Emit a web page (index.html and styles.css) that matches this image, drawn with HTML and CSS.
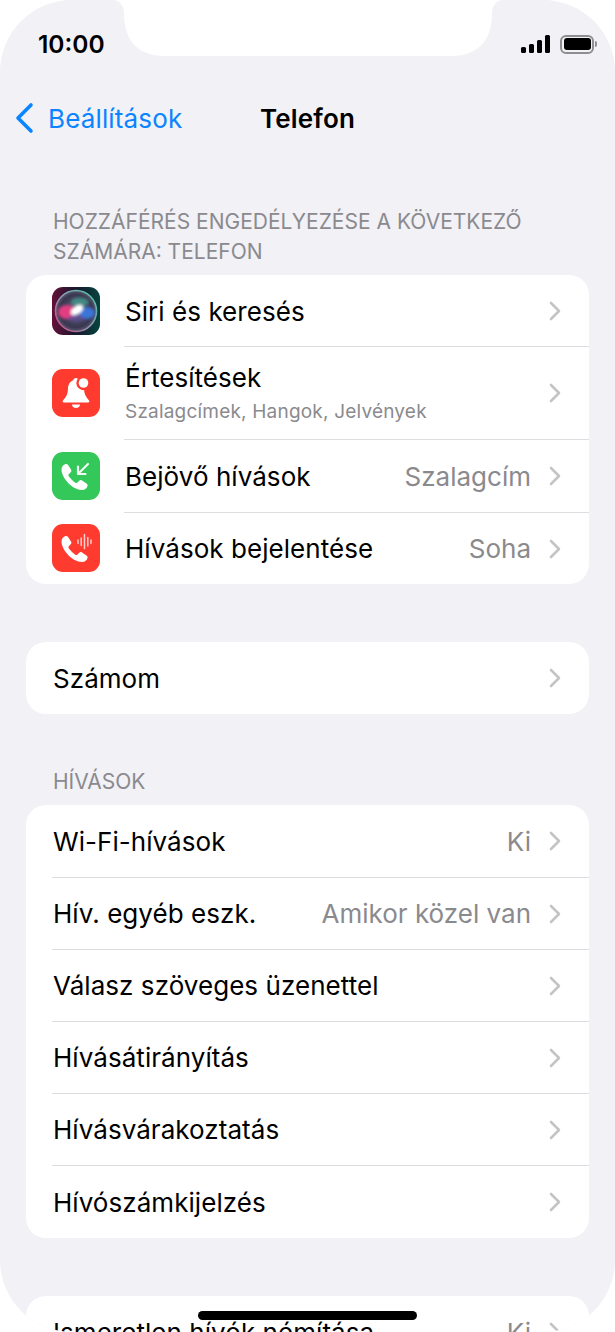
FILE: index.html
```html
<!DOCTYPE html>
<html lang="hu">
<head>
    <meta charset="UTF-8">
    <meta name="viewport" content="width=device-width, initial-scale=1.0">
    <link rel="stylesheet" href="styles.css">
    <title>Telefon</title>
</head>
<body>
    <svg class="defs" width="0" height="0">
        <defs>
            <symbol id="handset" viewBox="0 0 28 28">
                <path d="M5 1C3 1.500 1 3.500 1 6.500 1 15 12 27 21.500 27c3 0 5-2 5.500-4 .3-1.200-.2-2-1-2.600l-4.500-2.900c-1-.6-2-.5-2.800.3L17 19.500c-.7.7-1.700.7-2.500.1-2-1.600-4.500-4.100-6.100-6.100-.6-.8-.6-1.800.1-2.500l1.700-1.700c.8-.8.9-1.800.3-2.800L7.600 2C7 1.200 6.200.8 5 1z" fill="#fff"/>
            </symbol>
            <symbol id="chevron" viewBox="0 0 12 20">
                <path d="M2 2l8 8-8 8" fill="none" stroke="#c4c4c7" stroke-width="2.6" stroke-linecap="round" stroke-linejoin="round"/>
            </symbol>
        </defs>
    </svg>

    <div class="telefon">
        <svg class="notch" width="615" height="56" viewBox="0 0 615 56">
            <path d="M112 0c8 0 12 6 12 14 0 26 14 42 40 42h288c26 0 40-16 40-42 0-8 4-14 12-14z" fill="#fff"/>
        </svg>

        <div class="estado">
            <span class="hora">10:00</span>
            <div class="estado-iconos">
                <div class="senal">
                    <i class="b1"></i><i class="b2"></i><i class="b3"></i><i class="b4"></i>
                </div>
                <div class="bateria"><div class="bateria-nivel"></div></div>
                <div class="bateria-punta"></div>
            </div>
        </div>

        <div class="nav">
            <a class="atras">
                <svg width="20" height="32" viewBox="0 0 20 32">
                    <path d="M17 3L4 16l13 13" fill="none" stroke="#0a84ff" stroke-width="3.6" stroke-linecap="round" stroke-linejoin="round"/>
                </svg>
                <span>Beállítások</span>
            </a>
            <h1>Telefon</h1>
        </div>

        <p class="titulo titulo-primero">Hozzáférés engedélyezése a következő számára: Telefon</p>
        <div class="grupo">
            <div class="fila fila-siri">
                <div class="icono">
                    <svg width="48" height="48" viewBox="0 0 48 48">
                        <defs>
                            <linearGradient id="siriFondo" x1="0" y1="0" x2="1" y2="0">
                                <stop offset="0" stop-color="#641038"/>
                                <stop offset=".5" stop-color="#16182c"/>
                                <stop offset="1" stop-color="#06443f"/>
                            </linearGradient>
                            <linearGradient id="siriAro" x1="0" y1="1" x2="1" y2="0">
                                <stop offset="0" stop-color="#c9437c"/>
                                <stop offset=".5" stop-color="#8f98b8"/>
                                <stop offset="1" stop-color="#46c9a0"/>
                            </linearGradient>
                            <radialGradient id="siriInterior">
                                <stop offset="0" stop-color="#56627e"/>
                                <stop offset=".8" stop-color="#3a3650"/>
                                <stop offset="1" stop-color="#5a5a70"/>
                            </radialGradient>
                            <filter id="siriBlur" x="-30%" y="-30%" width="160%" height="160%">
                                <feGaussianBlur stdDeviation="1.500"/>
                            </filter>
                        </defs>
                        <rect width="48" height="48" fill="url(#siriFondo)"/>
                        <circle cx="24" cy="24" r="20.500" fill="url(#siriInterior)" stroke="url(#siriAro)" stroke-width="1.600"/>
                        <g filter="url(#siriBlur)">
                            <ellipse cx="15" cy="25" rx="9" ry="7" fill="#e23c82"/>
                            <ellipse cx="35" cy="26" rx="8" ry="6" fill="#3a74d8"/>
                            <ellipse cx="28" cy="15" rx="9" ry="4.500" fill="#3fb59c" opacity=".6"/>
                            <ellipse cx="24" cy="31" rx="8" ry="3.500" fill="#6c4fa8" opacity=".6"/>
                            <ellipse cx="25" cy="23" rx="7" ry="4" fill="#fff" transform="rotate(-35 25 23)"/>
                        </g>
                        <ellipse cx="25" cy="23" rx="4" ry="2" fill="#fff" transform="rotate(-35 25 23)"/>
                    </svg>
                </div>
                <div class="fila-cuerpo">
                    <span class="etiqueta">Siri és keresés</span>
                    <svg class="flecha"><use href="#chevron"/></svg>
                </div>
            </div>
            <div class="fila fila-alta">
                <div class="icono icono-rojo">
                    <svg width="48" height="48" viewBox="0 0 48 48">
                        <path d="M24 9c1.500 0 2.500 1 2.800 2.200 3.500 1.300 5.200 4.600 5.200 8.300 0 5 1.700 8.500 5 12 .8.800.3 2-.8 2H11.800c-1.100 0-1.600-1.200-.8-2 3.500-3.500 5-7 5-12 0-4 2.200-7.300 5.200-8.300C21.500 10 22.500 9 24 9z" fill="#fff"/>
                        <circle cx="31.500" cy="14" r="7.200" fill="#ff3b30"/>
                        <circle cx="31.500" cy="14" r="4.800" fill="#fff"/>
                        <path d="M20 35.500h8c0 2-1.800 3.500-4 3.500s-4-1.500-4-3.500z" fill="#fff"/>
                    </svg>
                </div>
                <div class="fila-cuerpo">
                    <div class="etiqueta-doble">
                        <span class="etiqueta">Értesítések</span>
                        <span class="detalle">Szalagcímek, Hangok, Jelvények</span>
                    </div>
                    <svg class="flecha"><use href="#chevron"/></svg>
                </div>
            </div>
            <div class="fila fila-bejovo">
                <div class="icono icono-verde">
                    <svg width="48" height="48" viewBox="0 0 48 48">
                        <use href="#handset" x="8.500" y="11" width="28" height="28"/>
                        <path d="M36 12L26 22M26 14.500V22h7.500" fill="none" stroke="#fff" stroke-width="2.200" stroke-linecap="round" stroke-linejoin="round" opacity=".92"/>
                    </svg>
                </div>
                <div class="fila-cuerpo">
                    <span class="etiqueta">Bejövő hívások</span>
                    <span class="valor">Szalagcím</span>
                    <svg class="flecha"><use href="#chevron"/></svg>
                </div>
            </div>
            <div class="fila">
                <div class="icono icono-rojo">
                    <svg width="48" height="48" viewBox="0 0 48 48">
                        <use href="#handset" x="8.500" y="11" width="28" height="28"/>
                        <path d="M26 16v3.500M29.200 14v7.500M32.500 10.500v14M35.800 13.500v8.500M39 16v3.500" fill="none" stroke="#fff" stroke-width="1.500" stroke-linecap="round" opacity=".75"/>
                    </svg>
                </div>
                <div class="fila-cuerpo">
                    <span class="etiqueta">Hívások bejelentése</span>
                    <span class="valor">Soha</span>
                    <svg class="flecha"><use href="#chevron"/></svg>
                </div>
            </div>
        </div>

        <div class="grupo grupo-suelto">
            <div class="fila">
                <div class="fila-cuerpo">
                    <span class="etiqueta">Számom</span>
                    <svg class="flecha"><use href="#chevron"/></svg>
                </div>
            </div>
        </div>

        <p class="titulo titulo-hivasok">Hívások</p>
        <div class="grupo">
            <div class="fila">
                <div class="fila-cuerpo">
                    <span class="etiqueta">Wi-Fi-hívások</span>
                    <span class="valor">Ki</span>
                    <svg class="flecha"><use href="#chevron"/></svg>
                </div>
            </div>
            <div class="fila">
                <div class="fila-cuerpo">
                    <span class="etiqueta">Hív. egyéb eszk.</span>
                    <span class="valor">Amikor közel van</span>
                    <svg class="flecha"><use href="#chevron"/></svg>
                </div>
            </div>
            <div class="fila">
                <div class="fila-cuerpo">
                    <span class="etiqueta">Válasz szöveges üzenettel</span>
                    <svg class="flecha"><use href="#chevron"/></svg>
                </div>
            </div>
            <div class="fila">
                <div class="fila-cuerpo">
                    <span class="etiqueta">Hívásátirányítás</span>
                    <svg class="flecha"><use href="#chevron"/></svg>
                </div>
            </div>
            <div class="fila">
                <div class="fila-cuerpo">
                    <span class="etiqueta">Hívásvárakoztatás</span>
                    <svg class="flecha"><use href="#chevron"/></svg>
                </div>
            </div>
            <div class="fila fila-ultima">
                <div class="fila-cuerpo">
                    <span class="etiqueta">Hívószámkijelzés</span>
                    <svg class="flecha"><use href="#chevron"/></svg>
                </div>
            </div>
        </div>

        <div class="grupo grupo-suelto">
            <div class="fila">
                <div class="fila-cuerpo">
                    <span class="etiqueta">Ismeretlen hívók némítása</span>
                    <span class="valor">Ki</span>
                    <svg class="flecha"><use href="#chevron"/></svg>
                </div>
            </div>
        </div>

        <div class="home"></div>
    </div>
</body>
</html>
```

FILE: styles.css
```css
* {
    margin: 0;
    padding: 0;
    box-sizing: border-box;
    font-family: Inter, "Liberation Sans", sans-serif;
}
html, body {
    width: 615px;
    height: 1332px;
    overflow: hidden;
    background-color: #fff;
}
.defs {
    position: absolute;
}
.telefon {
    position: relative;
    width: 615px;
    height: 1332px;
    overflow: hidden;
    background-color: #f1f1f6;
    border-radius: 72px;
    padding: 0 26px;
}
.notch {
    position: absolute;
    top: 0;
    left: 0;
}

/* barra de estado */
.estado {
    height: 88px;
    margin: 0 -8px 0 12px;
    display: flex;
    align-items: center;
    justify-content: space-between;
    position: relative;
}
.hora {
    font-size: 24.5px;
    font-weight: 600;
    color: #000;
}
.estado-iconos {
    display: flex;
    align-items: center;
}
.senal {
    display: flex;
    align-items: flex-end;
    gap: 3px;
    height: 18px;
    margin-right: 10px;
}
.senal i {
    display: block;
    width: 5px;
    border-radius: 1.5px;
    background-color: #000;
}
.senal .b1 { height: 6px; }
.senal .b2 { height: 9px; }
.senal .b3 { height: 13px; }
.senal .b4 { height: 18px; }
.bateria {
    width: 34px;
    height: 19px;
    border: 2px solid #8e8e92;
    border-radius: 6px;
    padding: 1.5px;
}
.bateria-nivel {
    height: 100%;
    background-color: #000;
    border-radius: 3px;
}
.bateria-punta {
    width: 2px;
    height: 6px;
    margin-left: 1px;
    background-color: #8e8e92;
    border-radius: 0 2px 2px 0;
}

/* navegacion */
.nav {
    position: relative;
    height: 60px;
    margin: 0 -26px;
    display: flex;
    align-items: center;
    justify-content: center;
}
.nav h1 {
    font-size: 26px;
    font-weight: 600;
    letter-spacing: .15px;
    color: #000;
}
.atras {
    position: absolute;
    left: 14px;
    top: 14px;
    display: flex;
    align-items: center;
    gap: 14px;
    font-size: 26px;
    letter-spacing: .15px;
    color: #0a84ff;
}

/* grupos */
.titulo {
    padding: 0 27px;
    font-size: 21px;
    line-height: 30px;
    color: #8a8a8e;
    text-transform: uppercase;
}
.titulo-primero {
    margin-top: 59px;
    margin-bottom: 8px;
}
.titulo-hivasok {
    margin-top: 53px;
    margin-bottom: 8px;
}
.grupo {
    background-color: #fff;
    border-radius: 20px;
}
.grupo-suelto {
    margin-top: 58px;
}
.fila {
    display: flex;
    align-items: center;
    height: 72px;
    padding-left: 26px;
}
.fila-siri {
    height: 71px;
    padding-top: 1px;
}
.fila-alta {
    height: 93px;
}
.fila-bejovo,
.fila-ultima {
    height: 73px;
}
.fila-cuerpo {
    flex: 1;
    height: 100%;
    display: flex;
    align-items: center;
    padding: 0 28px 0 1px;
}
.fila + .fila .fila-cuerpo {
    border-top: 1px solid #dedee2;
}
.icono {
    width: 48px;
    height: 48px;
    margin-right: 24px;
    flex-shrink: 0;
    border-radius: 11px;
    overflow: hidden;
}
.icono svg {
    display: block;
}
.icono-rojo {
    background-color: #ff3b30;
}
.icono-verde {
    background-color: #34c759;
}
.etiqueta {
    font-size: 26px;
    letter-spacing: .05px;
    color: #000;
}
.etiqueta-doble {
    display: flex;
    flex-direction: column;
}
.etiqueta-doble .etiqueta {
    line-height: 30px;
}
.detalle {
    margin-top: 7px;
    font-size: 19px;
    letter-spacing: .2px;
    color: #8a8a8e;
}
.valor {
    margin-left: auto;
    font-size: 26px;
    color: #8a8a8e;
}
.flecha {
    width: 12px;
    height: 20px;
    margin-left: 18px;
    flex-shrink: 0;
}
.etiqueta-doble + .flecha,
.etiqueta:first-child + .flecha {
    margin-left: auto;
}
.home {
    position: absolute;
    left: 198px;
    top: 1311px;
    width: 219px;
    height: 9px;
    background-color: #000;
    border-radius: 5px;
}
```
